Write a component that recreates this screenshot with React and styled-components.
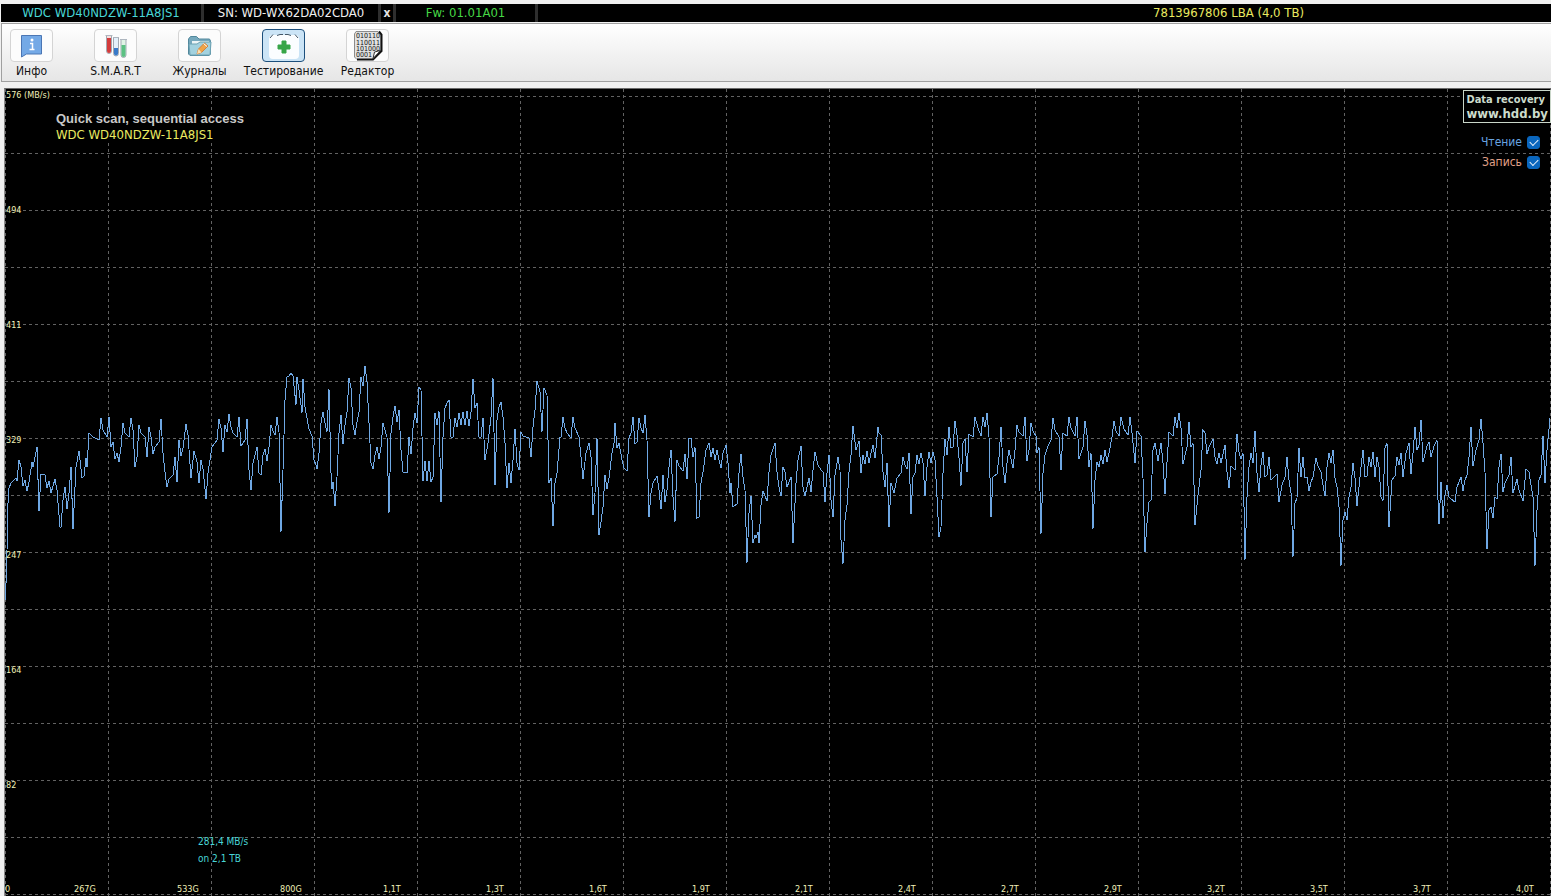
import React, { useState } from 'react';
import styled, { createGlobalStyle, css } from 'styled-components';

const GlobalStyle = createGlobalStyle`
  * {
    box-sizing: border-box;
  }

  body {
    margin: 0;
    background: #f0f0f0;
    font-family: 'DejaVu Sans Condensed', 'DejaVu Sans', 'Noto Sans', sans-serif;
    font-size: 12px;
  }
`;

const Window = styled.div`
  padding-top: 4px;
  overflow: hidden;
`;

const StatusBar = styled.header`
  display: flex;
  height: 18px;
  margin-left: 1px;
  background: #000;
  font-size: 13px;
  line-height: 18px;
`;

const StatusCell = styled.div`
  width: ${({ $width }) => $width}px;
  border-right: 3px solid #2e2e2e;
  color: ${({ $color }) => $color};
  text-align: center;
  white-space: nowrap;
`;

const CloseButton = styled.button`
  width: 15px;
  padding: 0;
  border: none;
  border-right: 3px solid #2e2e2e;
  background: #000;
  color: #e4e4e4;
  font: bold 12px 'DejaVu Sans Condensed', 'DejaVu Sans', sans-serif;
  line-height: 16px;
  cursor: pointer;
`;

const Capacity = styled.div`
  margin-left: auto;
  padding-right: 247px;
  color: #eaea60;
`;

const Toolbar = styled.nav`
  display: grid;
  grid-template-columns: repeat(5, 43px);
  column-gap: 41px;
  height: 59px;
  margin: 1px 0 0 1px;
  padding: 5px 8px 0;
  border: 1px solid #a0a0a0;
  border-right: none;
  background: linear-gradient(#fff, #e6e6e6);
`;

const ToolButton = styled.button`
  display: flex;
  flex-direction: column;
  align-items: center;
  gap: 1px;
  padding: 0;
  border: none;
  background: none;
  color: #111;
  font: inherit;
  line-height: 16px;
  white-space: nowrap;
  cursor: pointer;
`;

const IconFrame = styled.span`
  display: flex;
  align-items: center;
  justify-content: center;
  width: 43px;
  height: 33px;
  border: 1px solid #d4d4d4;
  border-radius: 4px;
  background: #fcfcfc;

  ${({ $active }) =>
    $active &&
    css`
      border-color: #1c4f7c;
      background: #cbe4f6;
    `}
`;

const ToolLabel = styled.span`
  display: flex;
  justify-content: center;
  width: 43px;
`;

const ChartPanel = styled.main`
  position: relative;
  margin: 6px 0 0 4px;
  border-top: 1px solid #696969;
  border-left: 1px solid #8c8c8c;
  background: #000;
`;

const ChartSvg = styled.svg`
  display: block;
  width: 100%;
  height: auto;
`;

const AxisLabel = styled.text`
  fill: #f0f0b8;
  font-size: 9px;
`;

const ChartTitle = styled.div`
  position: absolute;
  top: 22px;
  left: 51px;
  background: #000;
  line-height: 16px;
`;

const ScanName = styled.h1`
  margin: 0;
  color: #c8c8c8;
  font: bold 13px 'Liberation Sans', Arial, sans-serif;
  line-height: 16px;
`;

const ScanDevice = styled.div`
  color: #eaea60;
  font-size: 13px;
`;

const Readout = styled.div`
  position: absolute;
  bottom: 29px;
  left: 193px;
  color: #48d6d6;
  font-size: 10px;
  line-height: 17px;
`;

const Promo = styled.a`
  position: absolute;
  top: 1px;
  right: 0;
  padding: 1px 2px;
  border: 1px solid #c9d6c9;
  background: #000;
  color: #ccdccc;
  font-size: 11px;
  font-weight: bold;
  line-height: 15px;
  text-decoration: none;
`;

const PromoSite = styled.span`
  display: block;
  font-size: 13px;
  line-height: 14px;
`;

const Legend = styled.div`
  position: absolute;
  top: 43px;
  right: 11px;
  display: flex;
  flex-direction: column;
  align-items: flex-end;
`;

const LegendLabel = styled.label`
  display: flex;
  align-items: center;
  gap: 5px;
  height: 20px;
  color: ${({ $color }) => $color};
`;

const Checkbox = styled.input`
  display: flex;
  align-items: center;
  justify-content: center;
  appearance: none;
  width: 13px;
  height: 13px;
  margin: 0;
  border: 1px solid #0a66bd;
  border-radius: 3px;
  background: #000;

  &:checked {
    background: #0a66bd;
  }

  &:checked::after {
    content: '';
    width: 7px;
    height: 4px;
    margin-bottom: 2px;
    border: solid #e8f2fc;
    border-width: 0 0 1px 1px;
    transform: rotate(-45deg);
  }
`;

const InfoIcon = () => (
  <svg width="24" height="24" viewBox="0 0 24 24">
    <path d="M1.500 1.500h20v18.500h-15l-5 3z" fill="#74a9e6" stroke="#4b76b4" />
    <circle cx="12" cy="6" r="1.500" fill="#fff" />
    <path d="M10 9.500h2.500v6M9.500 15.500h5" fill="none" stroke="#fff" strokeWidth="1.500" />
  </svg>
);

const SmartIcon = () => (
  <svg width="24" height="26" viewBox="0 0 24 26">
    <path d="M2.500 3v15a2.500 2.500 0 0 0 5 0V3" fill="#f8dede" stroke="#a2a9b2" />
    <path d="M3 5h4v13a2 2 0 0 1-4 0z" fill="#d43c3c" />
    <path d="M1.500 2.500h7M9 4.500h6M16 6.500h7" stroke="#aeb6bf" />
    <path d="M9.500 5v15.500a2.500 2.500 0 0 0 5 0V5" fill="#e4f0fa" stroke="#a2a9b2" />
    <path d="M10 15h4v5.500a2 2 0 0 1-4 0z" fill="#397ac9" />
    <path d="M17 7v15a2.500 2.500 0 0 0 5 0V7" fill="#e0f4e6" stroke="#a2a9b2" />
    <path d="M17.500 12h4v10a2 2 0 0 1-4 0z" fill="#5cc183" />
  </svg>
);

const LogsIcon = () => (
  <svg width="26" height="24" viewBox="0 0 26 24">
    <path d="M1.500 20V5l2-2.500h6L12 5h10.500l1 2v13l-1.500 1.500H3z" fill="#76a9bd" stroke="#52889c" />
    <path d="M5 7h17v10H5z" fill="#edf5f6" />
    <path d="M2 10h8l3-2h11l-1 13H3z" fill="#a3d2df" stroke="#6da2b3" />
    <path d="M10 20l1.500-5 6-6 3.500 3-6.500 6.500z" fill="#efa448" stroke="#cf8240" />
    <path d="M10 20l1.500-5 3 3.500z" fill="#fae0b2" />
    <path d="M16.500 9.500l3.500 3" stroke="#fff" />
  </svg>
);

const TestIcon = () => (
  <svg width="34" height="28" viewBox="0 0 34 28">
    <rect x="2" y="3" width="30" height="24" rx="4" fill="#fbfdff" />
    <path d="M3 6l3-3.500M10 3.500l3-1h3M18 2.500h3l3 1M28 2.500L31 6" fill="none" stroke="#435666" />
    <path d="M15 9h4v4h4v4h-4v4h-4v-4h-4v-4h4z" fill="#37a548" stroke="#37a548" strokeLinejoin="round" />
  </svg>
);

const EditorIcon = () => (
  <svg width="30" height="31" viewBox="0 0 30 31">
    <path d="M3 1.500h22l3 3V21l-8 8.500H4L1.500 27V4z" fill="#e2e2e2" stroke="#8b8b8b" />
    <path d="M26 1.500l2.500 3V21l-8.500 8.500H4" fill="none" stroke="#111" strokeWidth="2" />
    <path d="M27.500 20.500l-7.500 8 1.500-6.500z" fill="#fff" stroke="#333" />
    <g fill="#111" fontSize="7">
      <text x="3" y="8">010110</text>
      <text x="3" y="15">110011</text>
      <text x="3" y="21">101000</text>
      <text x="3" y="27">0001</text>
    </g>
  </svg>
);

const tools = [
  { id: 'info', label: 'Инфо', Icon: InfoIcon },
  { id: 'smart', label: 'S.M.A.R.T', Icon: SmartIcon },
  { id: 'logs', label: 'Журналы', Icon: LogsIcon },
  { id: 'test', label: 'Тестирование', Icon: TestIcon },
  { id: 'editor', label: 'Редактор', Icon: EditorIcon },
];

const speedLabels = ['576 (MB/s)', '494', '411', '329', '247', '164', '82'];
const positionLabels = [
  '267G', '533G', '800G', '1,1T', '1,3T', '1,6T', '1,9T',
  '2,1T', '2,4T', '2,7T', '2,9T', '3,2T', '3,5T', '3,7T', '4,0T',
];

// Read speed trace, in chart units
const readTrace = `
  5,600 6,583 7,550 8,503 9,488 11,483 14,480 16,478 17,481 19,460 21,467 23,486 25,480 27,491 29,482
  32,462 33,467 37,447 39,511 41,474 45,475 47,488 49,481 51,493 55,479 57,490 60,527 61,527 63,500
  65,487 67,509 69,493 71,467 73,529 76,467 79,451 82,478 84,476 86,458 87,467 89,433 93,437 99,440
  101,418 103,430 107,437 109,417 111,447 113,442 115,459 117,453 119,462 121,447 123,423 125,433
  129,437 131,418 133,430 135,467 137,457 139,425 141,433 145,437 147,457 149,427 151,437 153,454
  155,447 159,442 161,419 163,453 165,472 167,487 169,479 173,475 175,457 177,482 179,440 181,456
  183,448 186,424 188,435 191,478 194,451 197,462 199,483 201,460 203,469 206,499 208,473 212,447
  217,440 219,419 221,428 223,452 225,425 227,432 229,414 231,427 233,433 237,437 239,417 241,446
  245,440 247,419 249,470 251,490 253,463 257,447 259,473 261,475
  263,455 265,449 267,461 269,447 271,425 273,431 275,435 277,417 279,432 281,532 283,470 285,400
  287,377 289,376 291,373 293,376 296,405 297,377 299,390 302,413 303,379 305,407 307,418 309,429
  312,436 314,460 316,465 317,469 319,453 321,423 323,412 325,423 327,432 329,389 331,473 332,489
  333,482 335,506 337,477 339,433 341,415 343,444 345,425 347,412 349,378 351,388 353,425 355,435
  357,422 359,412 361,377 363,386 365,366 367,382 369,423 371,463 373,469 375,455 377,447 379,459
  381,447 383,423 385,430 387,437 389,513 391,433 393,417 395,406 397,422 399,410 401,450 403,472
  407,473 409,437 411,454 413,428 415,413 417,423 419,387 421,390 423,481 425,461 427,481 429,461
  431,482 433,477 435,413 437,425 439,411 441,502 443,437 445,408 447,403 449,400 451,437 453,437
  455,418 457,427 459,413 461,425 463,412 465,425 467,411 469,426 471,412 473,379 475,408 477,403
  479,437 481,437 483,418 485,460 488,443 491,417 493,378 495,485 497,420 499,407 501,402 503,417
  505,443 507,488 509,463 511,483 513,460 515,429
  517,463 519,470 521,432 523,436 529,438 531,457 533,427 535,410 537,381 540,392 542,432 544,388
  547,395 549,483 551,478 553,526 555,483 557,473 560,437 561,437 563,417 565,428 567,433 571,438
  573,417 575,428 579,437 581,457 583,479 586,453 589,443 591,457 593,515 595,493 597,438 599,535
  601,522 603,507 605,475 607,489 609,478 612,453 614,443 615,423 617,448 619,443 622,460 624,468
  627,471 629,438 631,433 633,417 635,444 637,442 639,418 641,428 643,433 645,415 647,440 649,517
  651,493 653,483 657,476 659,490 661,509 663,475 665,502 667,490 669,467 671,450 673,497 675,522
  677,460 679,466 683,471 685,454 687,479 689,438 691,438 693,457 695,447 697,518 699,517 701,483
  703,472 706,450 709,443 711,457 713,448 715,460 717,450 719,460 721,468 723,453 726,445 728,463
  730,493 731,483 733,507 737,504 739,473 741,454 743,477 745,490 747,563 749,513 751,496 753,543
  755,535 756,538 758,532 759,543 761,505 763,491 767,501
  769,472 771,455 775,443 777,472 779,487 781,496 783,467 785,472 787,487 791,477 793,543 796,483
  798,460 801,446 803,487 805,496 809,478 811,492 813,470 815,452 818,465 821,470 823,472 825,502
  827,473 829,455 831,500 833,517 835,475 838,457 840,470 841,540 843,564 845,520 847,505 849,472
  851,455 853,426 856,450 859,441 861,473 863,455 865,464 867,451 869,463 871,453 873,445 875,458
  878,427 879,433 881,435 883,472 885,487 887,463 889,527 891,483 894,493 897,478 901,473 903,457
  905,465 907,469 909,453 911,514 913,477 915,473 917,455 919,464 921,453 923,463 925,496 927,467
  929,452 931,463 933,452 935,460 937,497 939,537 941,527 943,473 945,439 947,455 949,427 951,448
  953,447 955,421 957,435 959,458 961,486 963,443 965,439 967,472 969,434 973,437 975,417 978,428
  981,436 983,417 985,427 987,413 989,437 991,517 993,477 997,474 999,457 1001,427 1003,467
  1005,483 1007,463 1009,450 1013,468 1015,450
  1017,425 1019,432 1023,436 1025,417 1027,461 1029,450 1031,423 1033,431 1036,436 1037,453 1039,447
  1041,534 1043,473 1045,455 1048,446 1051,440 1053,418 1055,430 1059,437 1061,470 1063,433 1067,436
  1069,417 1071,428 1075,436 1077,417 1079,459 1083,447 1085,421 1087,435 1089,467 1091,453 1093,529
  1095,480 1097,462 1099,467 1101,455 1103,464 1105,450 1107,462 1110,448 1112,437 1114,421 1116,431
  1119,436 1121,417 1124,429 1128,435 1130,417 1132,433 1135,463 1137,431 1141,436 1143,478 1145,552
  1147,523 1149,502 1151,500 1153,450 1155,443 1158,461 1161,443 1163,463 1165,494 1167,462 1169,432
  1173,436 1175,417 1177,428 1179,413 1181,428 1183,464 1187,447 1189,422 1191,447 1193,443 1195,525
  1198,495 1201,470 1203,430 1205,433 1207,454 1209,447 1213,439 1215,457 1217,464 1219,453 1221,463
  1225,445 1227,472 1229,488 1231,466 1235,470 1237,434 1239,452 1241,459 1243,453 1245,560 1247,497
  1249,467 1251,453 1253,463 1255,431 1257,473 1259,492 1261,465 1263,452 1265,477 1267,475 1269,457
  1271,480 1277,474 1279,502 1282,485 1285,477 1287,457
  1289,480 1291,493 1293,557 1295,503 1297,498 1299,448 1301,477 1303,457 1305,478 1307,477 1309,491
  1311,482 1313,477 1316,458 1318,466 1321,472 1323,485 1325,496 1327,467 1329,453 1331,463 1333,450
  1335,478 1337,487 1339,507 1341,566 1343,520 1345,512 1347,520 1349,497 1351,487 1353,463 1355,478
  1357,506 1359,487 1361,467 1363,450 1365,477 1367,476 1369,457 1371,467 1373,452 1375,477 1377,457
  1379,467 1381,497 1383,501 1385,448 1387,443 1389,527 1392,480 1395,476 1397,457 1399,465 1401,453
  1403,477 1406,453 1409,443 1411,474 1413,453 1415,427 1417,450 1419,445 1421,420 1423,462 1427,446
  1429,442 1431,457 1434,446 1437,440 1438,500 1439,524 1441,482 1443,518 1445,495 1447,485 1449,497
  1451,499 1455,502 1457,487 1461,477 1463,491 1465,480 1467,475 1469,457 1471,427 1473,466 1476,450
  1479,440 1481,419 1483,443 1485,472 1487,549 1489,510 1491,507 1493,518 1495,497 1497,499 1499,467
  1501,454 1503,492 1505,483 1509,475 1511,457 1513,493 1517,479 1519,490 1523,501 1526,469 1529,472
  1531,485 1533,497 1535,566 1537,510 1539,480 1541,475 1543,436 1545,483 1547,450 1550,418
`;

const gridRows = Array.from({ length: 15 }, (_, i) => 96.5 + i * 57);
const gridColumns = Array.from({ length: 16 }, (_, i) => 5.5 + i * 103);

const SpeedChart = ({ showRead }) => (
  <ChartSvg viewBox="5 89 1546 807" role="img" aria-label="Speed graph">
    <g stroke="#626262" strokeDasharray="3 3" shapeRendering="crispEdges">
      {gridRows.map((y) => (
        <line key={y} x1="5" x2="1551" y1={y} y2={y} />
      ))}
      {gridColumns.map((x) => (
        <line key={x} x1={x} x2={x} y1="89" y2="896" />
      ))}
    </g>
    <rect x="6" y="90" width="46" height="11" fill="#000" />
    {showRead && (
      <polyline points={readTrace} fill="none" stroke="#6fa8e4" shapeRendering="crispEdges" />
    )}
    {speedLabels.map((label, i) => (
      <AxisLabel key={label} x="6" y={98 + i * 115}>{label}</AxisLabel>
    ))}
    <AxisLabel x="5" y="892">0</AxisLabel>
    {positionLabels.map((label, i) => (
      <AxisLabel key={label} x={74 + i * 103} y="892">{label}</AxisLabel>
    ))}
  </ChartSvg>
);

const App = () => {
  const [activeTool, setActiveTool] = useState('test');
  const [showRead, setShowRead] = useState(true);
  const [showWrite, setShowWrite] = useState(true);

  return (
    <Window>
      <GlobalStyle />
      <StatusBar>
        <StatusCell $width={203} $color="#48d6d6">WDC WD40NDZW-11A8JS1</StatusCell>
        <StatusCell $width={177} $color="#f0f0f0">SN: WD-WX62DA02CDA0</StatusCell>
        <CloseButton type="button">x</CloseButton>
        <StatusCell $width={142} $color="#46d846">Fw: 01.01A01</StatusCell>
        <Capacity>7813967806 LBA (4,0 TB)</Capacity>
      </StatusBar>

      <Toolbar>
        {tools.map(({ id, label, Icon }) => (
          <ToolButton key={id} type="button" onClick={() => setActiveTool(id)}>
            <IconFrame $active={activeTool === id}>
              <Icon />
            </IconFrame>
            <ToolLabel>{label}</ToolLabel>
          </ToolButton>
        ))}
      </Toolbar>

      <ChartPanel>
        <SpeedChart showRead={showRead} />
        <ChartTitle>
          <ScanName>Quick scan, sequential access</ScanName>
          <ScanDevice>WDC WD40NDZW-11A8JS1</ScanDevice>
        </ChartTitle>
        <Promo href="#">
          Data recovery
          <PromoSite>www.hdd.by</PromoSite>
        </Promo>
        <Legend>
          <LegendLabel $color="#68a4e0">
            Чтение
            <Checkbox type="checkbox" checked={showRead} onChange={(e) => setShowRead(e.target.checked)} />
          </LegendLabel>
          <LegendLabel $color="#e0a088">
            Запись
            <Checkbox type="checkbox" checked={showWrite} onChange={(e) => setShowWrite(e.target.checked)} />
          </LegendLabel>
        </Legend>
        <Readout>
          <div>281,4 MB/s</div>
          <div>on 2,1 TB</div>
        </Readout>
      </ChartPanel>
    </Window>
  );
};

export default App;
